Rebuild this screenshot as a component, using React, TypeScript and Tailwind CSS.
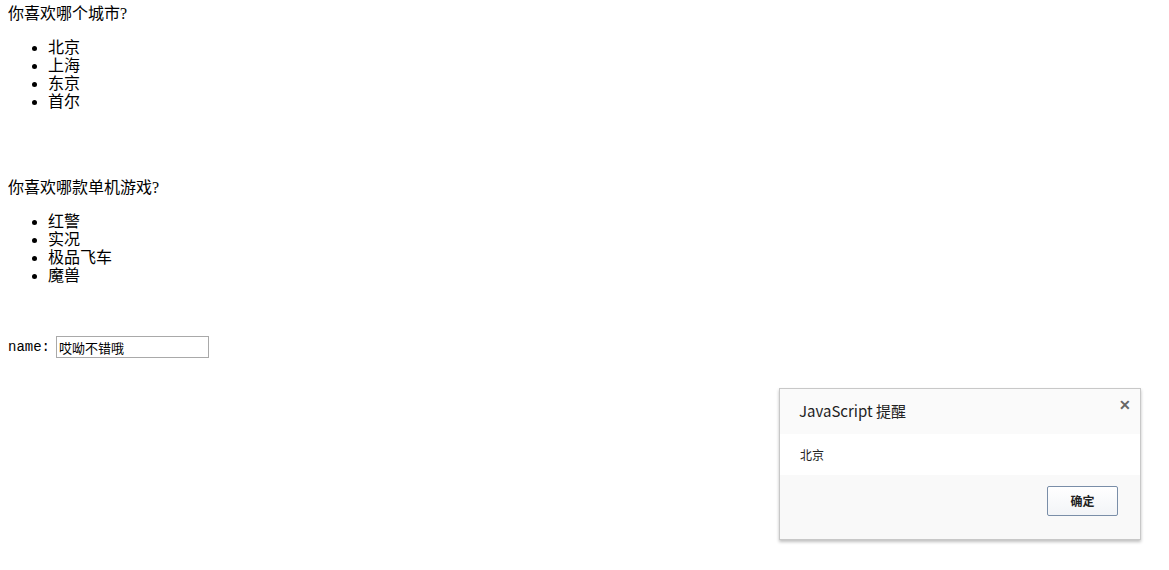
export default function App() {
  return (
    <div className="relative min-h-[570px] w-full bg-white pl-2 pt-[5px] text-black" style={{ fontFamily: '"Liberation Serif", "Noto Sans CJK SC", serif' }}>
      {/* city question */}
      <p className="text-[16px] leading-[18px]">你喜欢哪个城市?</p>
      <ul className="mt-4 list-disc pl-10 text-[16px] leading-[18px]">
        <li>北京</li>
        <li>上海</li>
        <li>东京</li>
        <li>首尔</li>
      </ul>

      {/* game question */}
      <p className="mt-[68px] text-[16px] leading-[18px]">你喜欢哪款单机游戏?</p>
      <ul className="mt-4 list-disc pl-10 text-[16px] leading-[18px]">
        <li>红警</li>
        <li>实况</li>
        <li>极品飞车</li>
        <li>魔兽</li>
      </ul>

      {/* name input */}
      <div className="mt-[51px] flex items-center gap-[6px]">
        <span className="text-[14px]" style={{ fontFamily: '"Liberation Mono", "Noto Sans CJK SC", monospace' }}>name:</span>
        <input
          defaultValue="哎呦不错哦"
          className="h-[22px] w-[153px] border border-[#a9a9a9] px-[2px] text-[13px] outline-none"
          style={{ fontFamily: '"Noto Sans CJK SC", sans-serif' }}
        />
      </div>

      {/* alert dialog */}
      <div
        className="absolute left-[779px] top-[388px] flex h-[152px] w-[362px] flex-col border border-[#c8c8c8] bg-white shadow-[0_2px_3px_rgba(0,0,0,0.25)]"
        style={{ fontFamily: '"Noto Sans CJK SC", "Open Sans", sans-serif' }}
      >
        <div className="relative flex h-[45px] items-center bg-[#fafafa] pl-[19px]">
          <span className="text-[15px] text-[#222]">JavaScript 提醒</span>
          <span className="absolute right-[9px] top-[5px] text-[14px] font-bold text-[#666]">✕</span>
        </div>
        <div className="flex h-[41px] items-center bg-white pl-[20px] text-[12px] text-[#222]">北京</div>
        <div className="flex flex-1 items-start justify-end bg-[#f9f9f9] pr-[22px] pt-[11px]">
          <button className="h-[30px] w-[71px] rounded-[2px] border border-[#7a8ea8] bg-gradient-to-b from-white to-[#f2f4f7] text-[12px] font-bold text-[#222]">
            确定
          </button>
        </div>
      </div>
    </div>
  );
}
